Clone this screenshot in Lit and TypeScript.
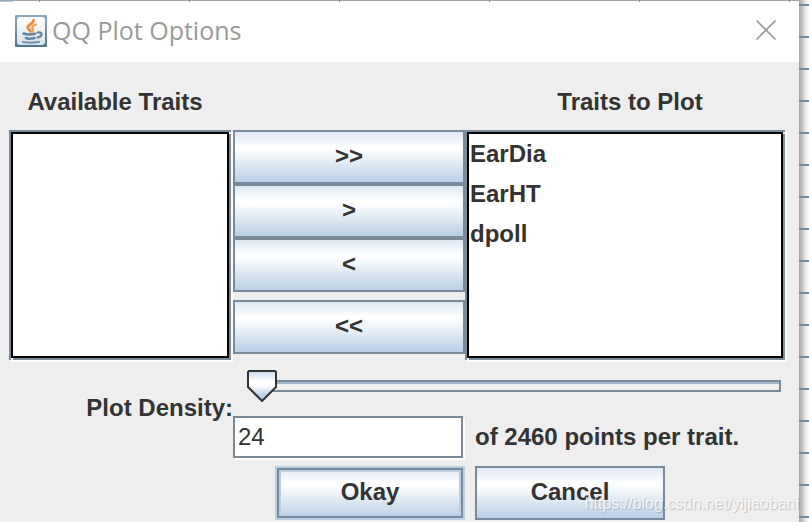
import { LitElement, html, css } from "lit";
import { customElement, state } from "lit/decorators.js";

@customElement("app-root")
export class AppRoot extends LitElement {
  @state() private available: string[] = [];
  @state() private plotted: string[] = ["EarDia", "EarHT", "dpoll"];
  @state() private density = 24;

  static styles = css`
    :host {
      --line: #7a8a99;
      --panel: #eeeeee;
      --ink: #333333;
      display: block;
      box-sizing: border-box;
      min-height: 100vh;
      padding-right: 10px;
      overflow: hidden;
      position: relative;
      color: var(--ink);
      font: bold 24px/28px "Liberation Sans", Arial, sans-serif;
      background:
        repeating-linear-gradient(to bottom, transparent 0 4px, var(--line) 4px 6px, transparent 6px 32px),
        linear-gradient(to right, #a6a6a6, #c0c0c0 3px, #e4e4e4 6px, #ffffff) right / 10px 100% no-repeat,
        #ffffff;
    }
    * { box-sizing: border-box; }
    .dialog {
      min-height: 100vh;
      display: flex;
      flex-direction: column;
      background: var(--panel);
    }
    .edge {
      height: 2px;
      background:
        linear-gradient(#8799ab, #c3d3e2) left / 13px 2px no-repeat,
        repeating-linear-gradient(to right, transparent 0 149px, var(--line) 149px 151px, transparent 151px 150px) 40px 0 / 150px 2px,
        linear-gradient(#a3a3a3 50%, #ffffff 50%);
    }
    .title {
      display: flex;
      align-items: center;
      gap: 5px;
      height: 60px;
      padding: 0 22px 2px 15px;
      background: #ffffff;
      color: #999999;
    }
    .title h1 {
      flex: 1;
      margin: 0;
      padding-bottom: 2px;
      font: 400 25px/32px "Open Sans", "Noto Sans", sans-serif;
    }
    .title svg { display: block; }
    .close {
      border: 0;
      padding: 0 0 2px;
      background: none;
      color: inherit;
    }
    .traits, .density {
      display: grid;
      grid-template-columns: 224px 232px minmax(0, 1fr);
      padding: 0 12px 0 9px;
    }
    .traits { padding-top: 26px; }
    .heading {
      padding-bottom: 14px;
      text-align: center;
    }
    .heading.first { padding-right: 12px; }
    .heading.last { grid-column: 3; padding-left: 8px; }
    .frame {
      position: relative;
      height: 230px;
      margin-right: 2px;
      border: 2px solid var(--line);
      box-shadow: 2px 2px 0 #ffffff;
    }
    .frame::before, .frame::after {
      content: "";
      position: absolute;
      width: 2px;
      height: 2px;
      background: #f4f6f8;
    }
    .frame::before { top: 0; right: -2px; }
    .frame::after { bottom: -2px; left: 0; }
    select {
      display: block;
      width: 100%;
      height: 100%;
      margin: 0;
      padding: 0;
      overflow: hidden;
      border: 2px solid #000000;
      border-radius: 0;
      outline: 0;
      background: #ffffff;
      color: var(--ink);
      font: inherit;
    }
    option {
      min-height: 40px;
      padding: 6px 1px;
      color: var(--ink);
      font: bold 24px/28px "Liberation Sans", Arial, sans-serif;
    }
    .moves { display: flex; flex-direction: column; }
    .push {
      height: 54px;
      padding: 0 0 2px;
      border: 2px solid var(--line);
      border-radius: 0;
      background: linear-gradient(#dde8f3, #ffffff 30%, #ffffff 34%, #b8cfe5);
      color: var(--ink);
      font: inherit;
    }
    .push.last { margin-top: 8px; }
    .density { row-gap: 8px; padding-top: 10px; }
    .name {
      grid-row: 1 / span 2;
      align-self: center;
      text-align: right;
      padding-bottom: 12px;
    }
    .range {
      grid-column: 2 / span 2;
      appearance: none;
      height: 32px;
      margin: 0 6px 6px 14px;
      background: none;
    }
    .range::-webkit-slider-runnable-track {
      height: 32px;
      background:
        linear-gradient(var(--line), var(--line)) right 10px / 2px 12px no-repeat,
        linear-gradient(var(--line) 2px, #a3b8cc 2px 4px, transparent 4px 10px, var(--line) 10px) right 10px / calc(100% - 15px) 12px no-repeat;
    }
    .range::-webkit-slider-thumb {
      appearance: none;
      width: 30px;
      height: 32px;
      background: url("data:image/svg+xml,%3Csvg xmlns='http://www.w3.org/2000/svg' width='30' height='32'%3E%3Cdefs%3E%3ClinearGradient id='g' x1='0' y1='0' x2='0' y2='1'%3E%3Cstop offset='0' stop-color='%23c8dbed'/%3E%3Cstop offset='.35' stop-color='%23fff'/%3E%3Cstop offset='.5' stop-color='%23fff'/%3E%3Cstop offset='.8' stop-color='%23b8cfe5'/%3E%3C/linearGradient%3E%3C/defs%3E%3Cpath d='M2 1H28L29 2V17L15 31L1 17V2Z' fill='url(%23g)' stroke='%23333' stroke-width='2'/%3E%3C/svg%3E") no-repeat;
    }
    .field {
      grid-column: 2;
      height: 42px;
      padding: 0 3px;
      margin-right: 2px;
      min-width: 0;
      border: 2px solid var(--line);
      border-radius: 0;
      box-shadow: 2px 2px 0 #ffffff;
      outline: 0;
      background: #ffffff;
      color: var(--ink);
      font: 400 24px/28px "Liberation Sans", Arial, sans-serif;
    }
    .note { align-self: center; padding-left: 10px; }
    .action { width: 190px; }
    .action.okay {
      grid-column: 2;
      justify-self: end;
      border-color: #b8cfe5;
      box-shadow: inset 0 0 0 2px var(--line), inset 0 0 0 4px #b8cfe5;
      background-clip: padding-box;
    }
    .action.cancel { margin-left: 10px; }
    .mark {
      position: absolute;
      right: 10px;
      bottom: 8px;
      color: rgba(255, 255, 255, 0.75);
      font: 400 16px/20px "Liberation Sans", Arial, sans-serif;
      text-shadow: 1px 1px 1px rgba(0, 0, 0, 0.2);
      pointer-events: none;
    }
  `;

  private push(label: string, name: string, extra = "") {
    return html`<button class="push ${extra}" aria-label=${name}>${label}</button>`;
  }

  render() {
    return html`
      <main class="dialog">
        <div class="edge"></div>
        <header class="title">
          <svg width="32" height="32" viewBox="0 0 32 32" aria-hidden="true">
            <defs>
              <linearGradient id="frame" x1="0" y1="0" x2="0" y2="1">
                <stop offset="0" stop-color="#8fa9bb" /><stop offset="1" stop-color="#4f7690" />
              </linearGradient>
              <linearGradient id="face" x1="0" y1="0" x2="0" y2="1">
                <stop offset="0" stop-color="#ffffff" /><stop offset="1" stop-color="#dde2e6" />
              </linearGradient>
            </defs>
            <rect width="32" height="32" rx="1" fill="url(#frame)" />
            <rect x="2" y="2" width="28" height="28" rx="3" fill="url(#face)" />
            <g fill="none" stroke-linecap="round">
              <path d="M18.500 5.500C18.500 9 12.500 9.500 12.800 12.500C13 14.500 15 14.500 15.500 16.500" stroke="#f08a35" stroke-width="2.800" />
              <path d="M21 9.500C18.500 10.500 16.500 11.500 17.200 13.200C17.800 14.500 19 14.500 17.500 16.500" stroke="#f2a05c" stroke-width="2.400" />
              <path d="M8.500 18.500C11 19.800 17 19.800 20 18.800M11 23C13 23.800 17 23.800 19.500 23" stroke="#6288a8" stroke-width="2.600" />
              <path d="M22.500 17.500C28 16.500 28 21.500 22.500 22.500" stroke="#6288a8" stroke-width="2.200" />
              <path d="M8 27C12 27.600 20 27.600 24 26.800" stroke="#7899b4" stroke-width="2.200" />
            </g>
          </svg>
          <h1>QQ Plot Options</h1>
          <button class="close" aria-label="Close">
            <svg width="22" height="22" viewBox="0 0 22 22" fill="none" stroke="currentColor" stroke-width="1.700">
              <path d="M1.500 1.500L20.500 20.500M20.500 1.500L1.500 20.500" />
            </svg>
          </button>
        </header>

        <section class="traits">
          <label class="heading first" for="available">Available Traits</label>
          <label class="heading last" for="plotted">Traits to Plot</label>
          <div class="frame">
            <select id="available" multiple>
              ${this.available.map((t) => html`<option>${t}</option>`)}
            </select>
          </div>
          <div class="moves">
            ${this.push(">>", "Add all")} ${this.push(">", "Add")}
            ${this.push("<", "Remove")} ${this.push("<<", "Remove all", "last")}
          </div>
          <div class="frame">
            <select id="plotted" multiple>
              ${this.plotted.map((t) => html`<option>${t}</option>`)}
            </select>
          </div>
        </section>

        <section class="density">
          <label class="name" for="points">Plot Density:</label>
          <input
            class="range"
            type="range"
            aria-label="Plot Density"
            min="24"
            max="2460"
            .value=${String(this.density)}
            @input=${(e: Event) => (this.density = Number((e.target as HTMLInputElement).value))}
          />
          <input class="field" id="points" type="text" .value=${String(this.density)} />
          <span class="note">of 2460 points per trait.</span>
          <button class="push action okay">Okay</button>
          <button class="push action cancel">Cancel</button>
        </section>
      </main>
      <span class="mark">https://blog.csdn.net/yijiaobani</span>
    `;
  }
}
